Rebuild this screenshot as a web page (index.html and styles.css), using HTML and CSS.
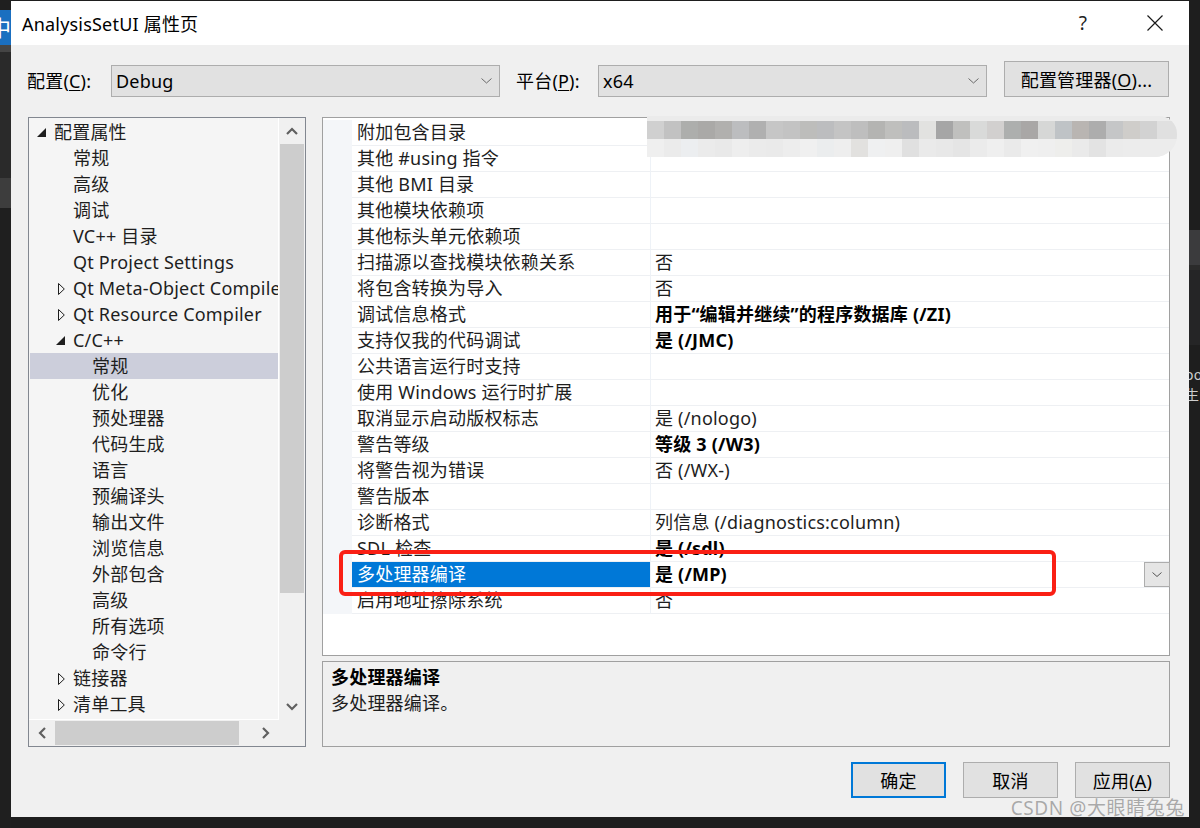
FILE: index.html
```html
<!DOCTYPE html>
<html lang="zh-CN">
<head>
<meta charset="utf-8">
<title>AnalysisSetUI 属性页</title>
<link rel="stylesheet" href="styles.css">
</head>
<body>
<div class="screen">
  <div class="edge-left">
    <div class="el-a"></div>
    <div class="el-blue"><span>中</span></div>
    <div class="el-b"></div>
    <div class="el-c"></div>
    <div class="el-d"></div>
    <div class="el-e"></div>
  </div>

  <div class="dialog">
    <div class="titlebar">
      <span class="title">AnalysisSetUI 属性页</span>
      <span class="tb-help">?</span>
      <span class="tb-close"><svg width="16" height="16" viewBox="0 0 16 16"><path d="M0.5 0.5L15.5 15.5M15.5 0.5L0.5 15.5" stroke="#1a1a1a" stroke-width="1.2" fill="none"/></svg></span>
    </div>

    <div class="toolbar">
      <span class="lbl lbl-config">配置(<u>C</u>):</span>
      <div class="combo"><span>Debug</span><svg width="11" height="6" viewBox="0 0 11 6"><path d="M0.5 0.5L5.5 5L10.5 0.5" stroke="#6a6a6a" fill="none"/></svg></div>
      <span class="lbl lbl-platform">平台(<u>P</u>):</span>
      <div class="combo"><span>x64</span><svg width="11" height="6" viewBox="0 0 11 6"><path d="M0.5 0.5L5.5 5L10.5 0.5" stroke="#6a6a6a" fill="none"/></svg></div>
      <button class="btn btn-cfg">配置管理器(<u>O</u>)...</button>
    </div>

    <div class="main">
      <div class="tree">
        <div class="tree-content">
          <div class="node l0"><span class="tw"><svg width="9" height="9" viewBox="0 0 9 9"><path d="M9 0V9H0Z" fill="#1e1e1e"/></svg></span><span>配置属性</span></div>
          <div class="node l1"><span class="tw"></span><span>常规</span></div>
          <div class="node l1"><span class="tw"></span><span>高级</span></div>
          <div class="node l1"><span class="tw"></span><span>调试</span></div>
          <div class="node l1"><span class="tw"></span><span>VC++ 目录</span></div>
          <div class="node l1"><span class="tw"></span><span>Qt Project Settings</span></div>
          <div class="node l1"><span class="tw"><svg class="coll" width="7" height="12" viewBox="0 0 7 12"><path d="M0.5 0.5L6.3 6L0.5 11.5Z" fill="none" stroke="#1e1e1e"/></svg></span><span>Qt Meta-Object Compiler</span></div>
          <div class="node l1"><span class="tw"><svg class="coll" width="7" height="12" viewBox="0 0 7 12"><path d="M0.5 0.5L6.3 6L0.5 11.5Z" fill="none" stroke="#1e1e1e"/></svg></span><span>Qt Resource Compiler</span></div>
          <div class="node l1"><span class="tw"><svg width="9" height="9" viewBox="0 0 9 9"><path d="M9 0V9H0Z" fill="#1e1e1e"/></svg></span><span>C/C++</span></div>
          <div class="node l2 sel"><span>常规</span></div>
          <div class="node l2"><span>优化</span></div>
          <div class="node l2"><span>预处理器</span></div>
          <div class="node l2"><span>代码生成</span></div>
          <div class="node l2"><span>语言</span></div>
          <div class="node l2"><span>预编译头</span></div>
          <div class="node l2"><span>输出文件</span></div>
          <div class="node l2"><span>浏览信息</span></div>
          <div class="node l2"><span>外部包含</span></div>
          <div class="node l2"><span>高级</span></div>
          <div class="node l2"><span>所有选项</span></div>
          <div class="node l2"><span>命令行</span></div>
          <div class="node l1"><span class="tw"><svg class="coll" width="7" height="12" viewBox="0 0 7 12"><path d="M0.5 0.5L6.3 6L0.5 11.5Z" fill="none" stroke="#1e1e1e"/></svg></span><span>链接器</span></div>
          <div class="node l1"><span class="tw"><svg class="coll" width="7" height="12" viewBox="0 0 7 12"><path d="M0.5 0.5L6.3 6L0.5 11.5Z" fill="none" stroke="#1e1e1e"/></svg></span><span>清单工具</span></div>
        </div>
        <div class="vscroll">
          <div class="sb-btn"><svg width="12" height="8" viewBox="0 0 12 8"><path d="M1 7L6 2L11 7" fill="none" stroke="#606060" stroke-width="2.2"/></svg></div>
          <div class="vthumb"></div>
          <div class="sb-track"></div>
          <div class="sb-btn"><svg width="12" height="8" viewBox="0 0 12 8"><path d="M1 1L6 6L11 1" fill="none" stroke="#606060" stroke-width="2.2"/></svg></div>
        </div>
        <div class="hscroll">
          <div class="sb-btn"><svg width="8" height="12" viewBox="0 0 8 12"><path d="M7 1L2 6L7 11" fill="none" stroke="#606060" stroke-width="2.2"/></svg></div>
          <div class="hthumb"></div>
          <div class="sb-track"></div>
          <div class="sb-btn"><svg width="8" height="12" viewBox="0 0 8 12"><path d="M1 1L6 6L1 11" fill="none" stroke="#606060" stroke-width="2.2"/></svg></div>
        </div>
        <div class="corner"></div>
      </div>

      <div class="rightcol">
        <div class="grid">
          <div class="row"><span class="gut"></span><span class="name">附加包含目录</span><span class="val"></span></div>
          <div class="row"><span class="gut"></span><span class="name">其他 #using 指令</span><span class="val"></span></div>
          <div class="row"><span class="gut"></span><span class="name">其他 BMI 目录</span><span class="val"></span></div>
          <div class="row"><span class="gut"></span><span class="name">其他模块依赖项</span><span class="val"></span></div>
          <div class="row"><span class="gut"></span><span class="name">其他标头单元依赖项</span><span class="val"></span></div>
          <div class="row"><span class="gut"></span><span class="name">扫描源以查找模块依赖关系</span><span class="val">否</span></div>
          <div class="row"><span class="gut"></span><span class="name">将包含转换为导入</span><span class="val">否</span></div>
          <div class="row"><span class="gut"></span><span class="name">调试信息格式</span><span class="val"><b>用于“编辑并继续”的程序数据库 (/ZI)</b></span></div>
          <div class="row"><span class="gut"></span><span class="name">支持仅我的代码调试</span><span class="val"><b>是 (/JMC)</b></span></div>
          <div class="row"><span class="gut"></span><span class="name">公共语言运行时支持</span><span class="val"></span></div>
          <div class="row"><span class="gut"></span><span class="name">使用 Windows 运行时扩展</span><span class="val"></span></div>
          <div class="row"><span class="gut"></span><span class="name">取消显示启动版权标志</span><span class="val">是 (/nologo)</span></div>
          <div class="row"><span class="gut"></span><span class="name">警告等级</span><span class="val"><b>等级 3 (/W3)</b></span></div>
          <div class="row"><span class="gut"></span><span class="name">将警告视为错误</span><span class="val">否 (/WX-)</span></div>
          <div class="row"><span class="gut"></span><span class="name">警告版本</span><span class="val"></span></div>
          <div class="row"><span class="gut"></span><span class="name">诊断格式</span><span class="val">列信息 (/diagnostics:column)</span></div>
          <div class="row"><span class="gut"></span><span class="name">SDL 检查</span><span class="val"><b>是 (/sdl)</b></span></div>
          <div class="row"><span class="gut"></span><span class="name name-sel">多处理器编译</span><span class="val"><b>是 (/MP)</b><span class="dd"><svg width="10" height="5" viewBox="0 0 10 5"><path d="M0.5 0.5L5 4.5L9.5 0.5" stroke="#555" fill="none"/></svg></span></span></div>
          <div class="row"><span class="gut"></span><span class="name">启用地址擦除系统</span><span class="val">否</span></div>
          <div class="highlight"></div>
        </div>
        <div class="desc">
          <div class="desc-title">多处理器编译</div>
          <div>多处理器编译。</div>
        </div>
      </div>
    </div>

    <div class="footer">
      <button class="btn btn-foot btn-ok">确定</button>
      <button class="btn btn-foot">取消</button>
      <button class="btn btn-foot">应用(<u>A</u>)</button>
    </div>

    <div class="mosaic"><div class="mz-top"></div><div class="mz-dark"></div><div class="mz-light"></div></div>
    <div class="watermark">CSDN @大眼睛兔兔</div>
  </div>

  <div class="edge-right">
    <div class="er-a"></div>
    <div class="er-b"></div>
    <div class="er-c"></div>
    <div class="er-d"></div>
    <div class="er-text"><span>oo</span><span>生</span></div>
  </div>
</div>
</body>
</html>
```

FILE: styles.css
```css
* { box-sizing: border-box; }
html, body { margin: 0; padding: 0; }
body {
  width: 1200px;
  height: 828px;
  overflow: hidden;
  background: #1e1e1e;
  font-family: "Noto Sans", "Noto Sans CJK SC", sans-serif;
  font-size: 18px;
  letter-spacing: 0.2px;
  color: #000;
}
u { text-decoration: underline; text-underline-offset: 2px; text-decoration-thickness: 1px; }

.screen { display: flex; height: 828px; }

/* dark desktop edges */
.edge-left { width: 11px; display: flex; flex-direction: column; overflow: hidden; }
.el-a { height: 10px; background: #1f1f1f; }
.el-blue { height: 35px; background: #1a6fc0; color: #fff; font-size: 22px; line-height: 35px; overflow: hidden; }
.el-blue span { display: block; margin-left: -11px; }
.el-b { height: 7px; background: #454545; }
.el-c { height: 126px; background: #2a2a2a; }
.el-d { height: 30px; background: #3d3d3d; }
.el-e { flex: 1; background: #1f1f1f; }

.edge-right { width: 11px; display: flex; flex-direction: column; overflow: hidden; }
.er-a { height: 230px; background: #1e1e1e; }
.er-b { height: 35px; background: #3b3b3d; }
.er-c { height: 5px; background: #2b2b2b; }
.er-d { height: 75px; background: #252526; }
.er-text {
  flex: 1;
  background: #1e1e1e;
  color: #cfcfcf;
  font-size: 14px;
  line-height: 20px;
  padding-top: 20px;
  display: flex;
  flex-direction: column;
  white-space: nowrap;
}
.er-text span { display: block; margin-left: -4px; }

/* dialog */
.dialog {
  width: 1178px;
  height: 816px;
  margin-top: 1px;
  background: #f0f0f0;
  position: relative;
  display: flex;
  flex-direction: column;
}

.titlebar {
  height: 44px;
  background: #fff;
  display: flex;
  align-items: center;
  padding-left: 11px;
}
.title { flex: 1; font-size: 18px; color: #000; }
.tb-help { width: 46px; text-align: center; margin-right: 26px; font-size: 19px; color: #222; }
.tb-close { width: 46px; margin-right: 11px; display: flex; justify-content: center; }

.toolbar {
  margin-top: 16px;
  height: 36px;
  display: flex;
  align-items: flex-end;
  padding-left: 16px;
}
.lbl { height: 32px; line-height: 32px; white-space: nowrap; }
.lbl-config { width: 84px; }
.lbl-platform { width: 82px; margin-left: 16px; }
.combo {
  width: 389px;
  height: 32px;
  background: #e1e1e1;
  border: 1px solid #adadad;
  display: flex;
  align-items: center;
  justify-content: space-between;
  padding-left: 4px;
  padding-right: 7px;
}
.btn {
  font-family: inherit;
  font-size: 18px;
  letter-spacing: 0.2px;
  color: #000;
  background: #e1e1e1;
  border: 1px solid #adadad;
  padding: 0;
  margin: 0;
}
.btn-cfg { width: 165px; height: 36px; margin-left: 17px; }

.main {
  margin-top: 20px;
  height: 630px;
  display: flex;
  gap: 16px;
  padding-left: 17px;
}

/* tree */
.tree {
  width: 278px;
  border: 1px solid #828790;
  background: #f0f0f0;
  display: grid;
  grid-template-columns: 1fr 26px;
  grid-template-rows: 1fr 26px;
}
.tree-content {
  background: #f5f5f5;
  overflow: hidden;
  padding-top: 1px;
  border-right: 1px solid #ffffff;
  border-bottom: 1px solid #ffffff;
}
.node {
  height: 26px;
  line-height: 26px;
  display: flex;
  align-items: center;
  white-space: nowrap;
  color: #1e1e1e;
}
.node.l0 { padding-left: 8px; }
.node.l1 { padding-left: 27px; }
.node.l2 { padding-left: 63px; }
.node.sel { background: #cccedb; margin-left: 1px; padding-left: 62px; }
.tw { width: 17px; flex: none; display: flex; align-items: center; padding-top: 1px; }
.tw .coll { margin-left: 2px; }

.vscroll { display: flex; flex-direction: column; background: #f0f0f0; }
.hscroll { display: flex; background: #f0f0f0; }
.sb-btn { flex: none; width: 26px; height: 26px; display: flex; align-items: center; justify-content: center; }
.vthumb { height: 449px; margin: 0 1px; background: #cdcdcd; flex: none; }
.hthumb { width: 184px; margin: 1px 0; background: #cdcdcd; flex: none; }
.sb-track { flex: 1; }
.corner { background: #f0f0f0; }

/* right column */
.rightcol {
  width: 848px;
  display: flex;
  flex-direction: column;
  gap: 5px;
}
.grid {
  height: 539px;
  border: 1px solid #a0a0a0;
  background: #fff;
  padding-top: 2px;
  position: relative;
}
.row { display: flex; height: 26px; }
.gut { width: 29px; flex: none; background: #f4f6f9; }
.name {
  width: 299px;
  flex: none;
  padding-left: 5px;
  line-height: 25px;
  border-bottom: 1px solid #eef0f3;
  border-right: 1px solid #eef2f7;
  white-space: nowrap;
  color: #1e1e1e;
}
.name-sel { background: #0078d7; color: #fff; }
.val {
  flex: 1;
  padding-left: 4px;
  line-height: 25px;
  border-bottom: 1px solid #eef0f3;
  display: flex;
  white-space: nowrap;
  color: #1e1e1e;
}
.val b { font-weight: 700; color: #000; }
.dd {
  margin-left: auto;
  width: 26px;
  height: 25px;
  background: #e5e5e5;
  border: 1px solid #adadad;
  display: flex;
  align-items: center;
  justify-content: center;
  margin-right: -1px;
}
.highlight {
  position: absolute;
  left: 16px;
  top: 432px;
  width: 717px;
  height: 46px;
  border: 4px solid #fa1f14;
  border-radius: 6px;
}

.desc {
  flex: 1;
  border: 1px solid #a0a0a0;
  background: #f0f0f0;
  padding: 2px 8px;
  line-height: 26px;
  color: #1e1e1e;
}
.desc-title { font-weight: 700; color: #000; }

/* footer */
.footer {
  margin-top: 15px;
  display: flex;
  justify-content: flex-end;
  gap: 17px;
  padding-right: 19px;
}
.btn-foot { width: 95px; height: 36px; }
.btn-ok { border: 2px solid #0078d7; }

/* redaction mosaic over first value */
.mosaic {
  position: absolute;
  left: 636px;
  top: 115px;
  width: 530px;
  height: 41px;
  background: #ebebeb;
  border-radius: 0 18px 22px 0;
  overflow: hidden;
  display: flex;
  flex-direction: column;
}
.mz-top { height: 5px; }
.mz-dark {
  height: 18px;
  background:
    linear-gradient(to right,
      #d0d0d0 0 17px, #c2c2c2 17px 34px, #adaeac 34px 51px, #aaa9a7 51px 68px,
      #b1b0ae 68px 85px, #bcbdbf 85px 102px, #b0b0b0 102px 119px, #c6c6c6 119px 136px,
      #c3c3c3 136px 153px, #bdbdbb 153px 170px, #bcbdbf 170px 187px, #c4c4c4 187px 204px,
      #bebebe 204px 221px, #b4b4b2 221px 238px, #bfbfbd 238px 255px, #bbbcbe 255px 272px,
      #e2e2e0 272px 289px, #a6a6a6 289px 306px, #c0c0be 306px 323px, #d9dad9 323px 340px,
      #d2d0cf 340px 357px, #adafae 357px 374px, #a9a7a6 374px 391px, #d6d7d6 391px 408px,
      #bfc3c6 408px 425px, #b9b5b2 425px 442px, #adadad 442px 459px, #c5c6c7 459px 476px,
      #cfcdca 476px 493px, #d2d2d2 493px 510px, #e0e0e0 510px 530px);
}
.mz-light {
  height: 18px;
  background:
    linear-gradient(to right,
      #efefef 0 17px, #ebebeb 17px 34px, #eceef0 34px 51px, #ebebeb 51px 68px,
      #e9e9e9 68px 85px, #eeeeee 85px 102px, #ebebeb 102px 119px, #eaeaea 119px 136px,
      #ededed 136px 153px, #f0f0f0 153px 170px, #ebedee 170px 187px, #eeeeee 187px 204px,
      #e2e1df 204px 221px, #eff0f1 221px 238px, #efefef 238px 255px, #e0e0e0 255px 272px,
      #eaeaea 272px 289px, #e8e8e8 289px 306px, #e5e5e5 306px 323px, #ebebeb 323px 340px,
      #efefef 340px 357px, #eaeaea 357px 374px, #f0f0f0 374px 391px, #efefef 391px 408px,
      #eeeeec 408px 425px, #eaeaea 425px 442px, #e3e3e3 442px 459px, #ebebeb 459px 476px,
      #ececec 476px 530px);
}

.watermark {
  position: absolute;
  right: 4px;
  bottom: -2px;
  line-height: 22px;
  font-size: 19px;
  letter-spacing: 0.6px;
  color: #a9a9a9;
  white-space: nowrap;
  text-shadow: 0 0 1px #ffffff;
}
```
